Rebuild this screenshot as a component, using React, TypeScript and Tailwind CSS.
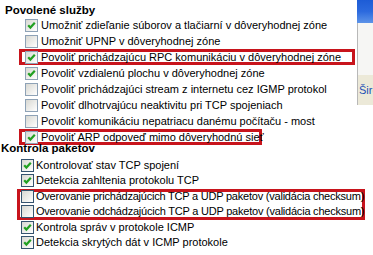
import React from 'react';

type Item = { label: string; checked: boolean };

const services: Item[] = [
  { label: 'Umožniť zdieľanie súborov a tlačiarní v dôveryhodnej zóne', checked: true },
  { label: 'Umožniť UPNP v dôveryhodnej zóne', checked: false },
  { label: 'Povoliť prichádzajúcu RPC komunikáciu v dôveryhodnej zóne', checked: true },
  { label: 'Povoliť vzdialenú plochu v dôveryhodnej zóne', checked: true },
  { label: 'Povoliť prichádzajúci stream z internetu cez IGMP protokol', checked: false },
  { label: 'Povoliť dlhotrvajúcu neaktivitu pri TCP spojeniach', checked: false },
  { label: 'Povoliť komunikáciu nepatriacu danému počítaču - most', checked: false },
  { label: 'Povoliť ARP odpoveď mimo dôveryhodnú sieť', checked: true },
];

const packets: Item[] = [
  { label: 'Kontrolovať stav TCP spojení', checked: true },
  { label: 'Detekcia zahltenia protokolu TCP', checked: true },
  { label: 'Overovanie prichádzajúcich TCP a UDP paketov (validácia checksum)', checked: false },
  { label: 'Overovanie odchádzajúcich TCP a UDP paketov (validácia checksum)', checked: false },
  { label: 'Kontrola správ v protokole ICMP', checked: true },
  { label: 'Detekcia skrytých dát v ICMP protokole', checked: true },
];

// XP style checkbox
const Check = ({ checked, dark }: { checked: boolean; dark?: boolean }) => (
  <span
    className={`flex h-[13px] w-[13px] shrink-0 items-center justify-center border bg-linear-to-br from-[#d8d8d2] to-white ${
      dark ? 'border-[#35536f]' : 'border-[#8ea2b6]'
    }`}
  >
    {checked && (
      <svg width="11" height="11" viewBox="0 0 11 11">
        <path d="M2.2 5.2 L4.4 7.6 L8.8 2.8" fill="none" stroke="#22a022" strokeWidth="2.2" />
      </svg>
    )}
  </span>
);

const App = () => {
  return (
    <div className="relative h-[255px] w-[373px] overflow-hidden bg-white font-['Liberation_Sans',Arial,sans-serif] text-[11px] text-black">
      {/* Povolené služby */}
      <div className="h-[17px] pl-[5px] pt-[3px] text-[11.5px] font-bold leading-[14px]">Povolené služby</div>
      {services.map((it, i) => {
        const red = i === 2 || i === 7;
        return (
          <div
            key={i}
            className={`ml-[19px] flex h-[16px] items-center gap-[3px] pl-[6px] ${
              red ? 'ring-3 ring-inset ring-[#c8141c]' : ''
            } ${i === 7 ? 'w-[243px]' : 'w-[336px]'}`}
          >
            <Check checked={it.checked} />
            <span className="whitespace-nowrap leading-[16px]">{it.label}</span>
          </div>
        );
      })}

      {/* Kontrola paketov */}
      <div className="-mt-[4px] h-[16.5px] pl-[1px] text-[11.5px] font-bold leading-[14px]">Kontrola paketov</div>
      {packets.slice(0, 2).map((it, i) => (
        <div key={i} className="ml-[17px] flex h-[15.5px] items-center gap-[2px] pl-[4px]">
          <Check checked={it.checked} dark />
          <span className="whitespace-nowrap leading-[15px]">{it.label}</span>
        </div>
      ))}
      <div className="ml-[17px] w-[348px] ring-3 ring-inset ring-[#c8141c]">
        {packets.slice(2, 4).map((it, i) => (
          <div key={i} className="flex h-[15.5px] items-center gap-[2px] pl-[4px]">
            <Check checked={it.checked} dark />
            <span className="whitespace-nowrap leading-[15px] tracking-[-0.22px]">{it.label}</span>
          </div>
        ))}
      </div>
      {packets.slice(4).map((it, i) => (
        <div key={i} className="ml-[17px] flex h-[15.5px] items-center gap-[2px] pl-[4px]">
          <Check checked={it.checked} dark />
          <span className="whitespace-nowrap leading-[15px]">{it.label}</span>
        </div>
      ))}

      {/* okno v pozadí vpravo */}
      <div className="absolute right-0 top-0 flex h-[105px] w-[16px] flex-col overflow-hidden">
        <div className="h-[23px] bg-linear-to-b from-[#1d5cd6] via-[#2c6ade] to-[#5d93e8]" />
        <div className="h-[52px] border-l border-[#b8b8b8] bg-[#f6f6f4]" />
        <div className="h-[30px] border-l border-[#b8b8b8] bg-[#ece9d8] pt-[8px] pl-[1px] text-[11px] leading-[14px] whitespace-nowrap text-[#2251b5]">
          Šire
        </div>
      </div>
    </div>
  );
};

export default App;
